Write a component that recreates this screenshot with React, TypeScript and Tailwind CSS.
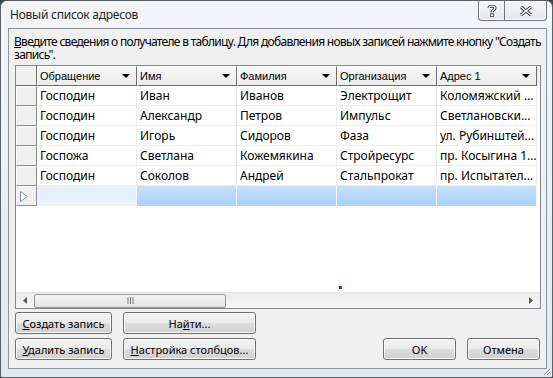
import React from "react";

const columns = ["Обращение", "Имя", "Фамилия", "Организация", "Адрес 1"];

const rows = [
  ["Господин", "Иван", "Иванов", "Электрощит", "Коломяжский ..."],
  ["Господин", "Александр", "Петров", "Импульс", "Светлановски..."],
  ["Господин", "Игорь", "Сидоров", "Фаза", "ул. Рубинштей..."],
  ["Госпожа", "Светлана", "Кожемякина", "Стройресурс", "пр. Косыгина 1..."],
  ["Господин", "Соколов", "Андрей", "Стальпрокат", "пр. Испытател..."],
];

const btn =
  "h-[22px] rounded-[3px] border border-[#707070] bg-[linear-gradient(#f2f2f2_0%,#ebebeb_48%,#dddddd_52%,#cfcfcf_100%)] shadow-[inset_0_0_0_1px_#fbfbfb] text-[11px] leading-none text-black flex items-center justify-center";

const SortArrow = () => (
  <svg width="8" height="4" viewBox="0 0 8 4">
    <path d="M0 0H8L4 4Z" fill="#000" />
  </svg>
);

const CaptionButtons = () => (
  <div className="mr-[5px] flex h-[20px] self-start rounded-b-[4px] border border-t-0 border-[#6d747c] bg-[linear-gradient(#f6f7f9,#e3e7ec)] shadow-[inset_0_0_0_1px_#fafbfc]">
    {/* help */}
    <div className="flex w-[26px] items-center justify-center border-r border-[#6d747c]">
      <svg width="10" height="13" viewBox="0 0 10 13">
        <path
          d="M2 4 C2 1.5 8 1.5 8 4 C8 6 5 6 5 8.5"
          fill="none"
          stroke="#3d3d3d"
          strokeWidth="3"
        />
        <path
          d="M2 4 C2 1.5 8 1.5 8 4 C8 6 5 6 5 8.5"
          fill="none"
          stroke="#fff"
          strokeWidth="1.2"
        />
        <rect x="3.6" y="9.8" width="2.8" height="2.8" fill="#fff" stroke="#3d3d3d" strokeWidth="0.9" />
      </svg>
    </div>
    {/* close */}
    <div className="flex w-[41px] items-center justify-center">
      <svg width="14" height="10" viewBox="0 0 14 10">
        <path d="M2 1L12 9M12 1L2 9" stroke="#3d3d3d" strokeWidth="3.2" />
        <path d="M2 1L12 9M12 1L2 9" stroke="#fff" strokeWidth="1.3" />
      </svg>
    </div>
  </div>
);

const Grid = () => (
  <div className="relative ml-[6px] flex h-[244px] w-[526px] flex-col border border-[#828790] bg-white">
    {/* header */}
    <div className="flex h-[20px] bg-[#f0f0f0]">
      <div className="h-[20px] w-[21px] border-b border-r border-[#6b6b6b] bg-[#f0f0f0]" />
      {columns.map((c) => (
        <div
          key={c}
          className="flex h-[20px] w-[100px] items-center justify-between border-b border-l border-r border-t border-b-[#6b6b6b] border-l-white border-r-[#6b6b6b] border-t-white bg-[linear-gradient(#f7f7f7,#ececec)] pl-[2px] pr-[6px] font-['Liberation_Sans',sans-serif] text-[11px]"
        >
          <span>{c}</span>
          <SortArrow />
        </div>
      ))}
    </div>

    {/* data rows */}
    {rows.map((r, i) => (
      <div key={i} className="flex h-[20px]">
        <div className="h-[20px] w-[21px] border-b border-l border-r border-t border-b-[#8c8c8c] border-l-white border-r-[#8c8c8c] border-t-white bg-[#f0f0f0]" />
        {r.map((v, j) => (
          <div
            key={j}
            className="flex h-[20px] w-[100px] items-center overflow-hidden whitespace-nowrap border-b border-r border-[#eeeeee] pl-[3px] text-[12px] text-black"
          >
            {v}
          </div>
        ))}
      </div>
    ))}

    {/* new record row */}
    <div className="flex h-[20px]">
      <div className="flex h-[20px] w-[21px] items-center border-b border-l border-r border-t border-b-[#8c8c8c] border-l-white border-r-[#8c8c8c] border-t-white bg-[#f0f0f0] pl-[3px]">
        <svg width="8" height="11" viewBox="0 0 8 11">
          <path d="M0.5 0.5V10.5L7.5 5.5Z" fill="#fff" stroke="#7e8ea8" />
        </svg>
      </div>
      <div className="h-[20px] w-[100px] border-r border-[#f4f8fc] bg-[#e6f1fc]" />
      {[0, 1, 2, 3].map((k) => (
        <div
          key={k}
          className="h-[20px] w-[100px] border-r border-[#f4f8fc] bg-[linear-gradient(#c6e0fb,#a9d0f7)]"
        />
      ))}
    </div>

    <div className="flex-1" />

    {/* stray red dot */}
    <div className="absolute left-[323px] top-[220px] h-[3px] w-[3px] bg-[#d01010]" />

    {/* horizontal scrollbar */}
    <div className="flex h-[16px] items-center border-t border-[#e6e6e6] bg-[linear-gradient(#ececec,#f5f5f5)]">
      <div className="flex w-[18px] justify-center">
        <svg width="4" height="7" viewBox="0 0 4 7">
          <path d="M4 0V7L0 3.5Z" fill="#5a5a5a" />
        </svg>
      </div>
      <div className="flex h-[14px] w-[192px] items-center justify-center rounded-[2px] border border-[#979797] bg-[linear-gradient(#f4f4f4,#e2e2e2)]">
        <svg width="7" height="7" viewBox="0 0 7 7">
          <path d="M1 0V7M3.5 0V7M6 0V7" stroke="#7a7a7a" strokeWidth="1" />
        </svg>
      </div>
      <div className="flex-1" />
      <div className="flex w-[18px] justify-center">
        <svg width="4" height="7" viewBox="0 0 4 7">
          <path d="M0 0V7L4 3.5Z" fill="#5a5a5a" />
        </svg>
      </div>
    </div>
  </div>
);

export default function App() {
  return (
    <div className="h-[378px] w-[553px] overflow-hidden bg-[#34414f] font-['Noto_Sans',sans-serif] text-black">
      <div className="flex h-full flex-col rounded-t-[7px] rounded-b-[2px] border border-[#5c6168] bg-[linear-gradient(#f3f5f8,#e3e7ed)]">
        {/* title bar */}
        <div className="flex h-[27px] items-start justify-between">
          <div className="pl-[9px] pt-[6px] text-[12px] leading-[16px] tracking-[-0.25px] text-[#1f1f1f]">
            Новый список адресов
          </div>
          <CaptionButtons />
        </div>

        {/* client area */}
        <div className="mb-[8px] ml-[7px] mr-[5px] flex flex-1 flex-col border border-[#8c949d] bg-[#f0f0f0]">
          <p className="whitespace-nowrap pl-[5px] pt-[6px] text-[12px] leading-[13px] tracking-[-0.7px] first-letter:underline">
            Введите сведения о получателе в таблицу. Для добавления новых записей
            нажмите кнопку "Создать
            <br />
            запись".
          </p>

          <div className="mt-[4px]">
            <Grid />
          </div>

          <div className="mt-[3px] flex items-end pl-[6px] pr-[6px]">
            <div className="grid grid-cols-[97px_133px] gap-x-[11px] gap-y-[4px]">
              <button className={btn}>
                <span className="first-letter:underline">Создать запись</span>
              </button>
              <button className={btn}>
                На<u>й</u>ти...
              </button>
              <button className={btn}>
                <span className="first-letter:underline">Удалить запись</span>
              </button>
              <button className={btn}>
                <span className="first-letter:underline">Настройка столбцов...</span>
              </button>
            </div>
            <div className="flex-1" />
            <div className="flex gap-[11px]">
              <button className={`${btn} w-[73px]`}>OK</button>
              <button className={`${btn} w-[73px]`}>Отмена</button>
            </div>
          </div>
        </div>

        {/* resize grip */}
        <div className="relative">
          <svg
            className="absolute bottom-[1px] right-[1px]"
            width="8"
            height="8"
            viewBox="0 0 8 8"
          >
            <path d="M7 1L1 7M7 4L4 7M7 6.5L6.5 7" stroke="#8d949c" strokeWidth="1" />
          </svg>
        </div>
      </div>
    </div>
  );
}
